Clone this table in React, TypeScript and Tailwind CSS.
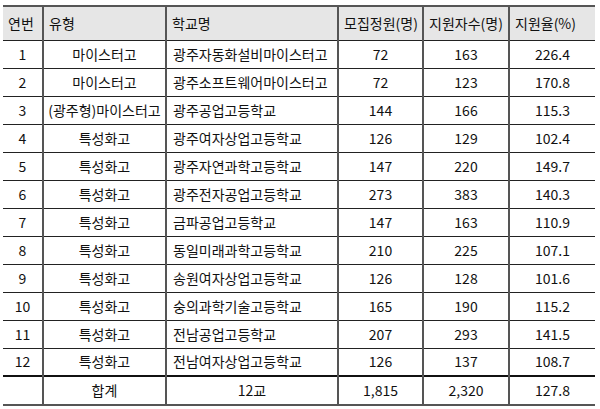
const rows = [
  [1, "마이스터고", "광주자동화설비마이스터고", "72", "163", "226.4"],
  [2, "마이스터고", "광주소프트웨어마이스터고", "72", "123", "170.8"],
  [3, "(광주형)마이스터고", "광주공업고등학교", "144", "166", "115.3"],
  [4, "특성화고", "광주여자상업고등학교", "126", "129", "102.4"],
  [5, "특성화고", "광주자연과학고등학교", "147", "220", "149.7"],
  [6, "특성화고", "광주전자공업고등학교", "273", "383", "140.3"],
  [7, "특성화고", "금파공업고등학교", "147", "163", "110.9"],
  [8, "특성화고", "동일미래과학고등학교", "210", "225", "107.1"],
  [9, "특성화고", "송원여자상업고등학교", "126", "128", "101.6"],
  [10, "특성화고", "숭의과학기술고등학교", "165", "190", "115.2"],
  [11, "특성화고", "전남공업고등학교", "207", "293", "141.5"],
  [12, "특성화고", "전남여자상업고등학교", "126", "137", "108.7"],
];

const headers = ["연번", "유형", "학교명", "모집정원(명)", "지원자수(명)", "지원율(%)"];
const widths = ["w-[40px]", "w-[123px]", "w-[172px]", "w-[85px]", "w-[86px]", "w-[86px]"];

export default function App() {
  return (
    <div className="w-[600px] h-[409px] bg-white pt-[5px] pl-[3px] font-['Malgun_Gothic','Noto_Sans_CJK_KR',sans-serif] text-[14px] text-[#111]">
      <table className="w-[592px] table-fixed border-collapse">
        <colgroup>
          {widths.map((w, i) => (
            <col key={i} className={w} />
          ))}
        </colgroup>
        <thead>
          <tr className="h-[34px] bg-[#e6e6e6] border-t-2 border-t-[#555] border-b border-b-[#222]">
            {headers.map((h, i) => (
              <th
                key={h}
                className={`font-normal text-left px-[5px] whitespace-nowrap ${i > 0 ? "border-l-2 border-l-[#555]" : ""}`}
              >
                {h}
              </th>
            ))}
          </tr>
        </thead>
        <tbody>
          {rows.map((r) => (
            <tr key={r[0]} className="h-[28px] border-b border-b-[#222]">
              <td className="text-center">{r[0]}</td>
              <td className="text-center border-l-2 border-l-[#555] whitespace-nowrap">{r[1]}</td>
              <td className="text-left px-[6px] border-l-2 border-l-[#555] whitespace-nowrap">{r[2]}</td>
              <td className="text-center border-l-2 border-l-[#555]">{r[3]}</td>
              <td className="text-center border-l-2 border-l-[#555]">{r[4]}</td>
              <td className="text-center border-l-2 border-l-[#555]">{r[5]}</td>
            </tr>
          ))}
          <tr className="h-[29px] border-t-2 border-t-[#111] border-b-2 border-b-[#555]">
            <td></td>
            <td className="text-center border-l-2 border-l-[#555]">합계</td>
            <td className="text-center border-l-2 border-l-[#555]">12교</td>
            <td className="text-center border-l-2 border-l-[#555]">1,815</td>
            <td className="text-center border-l-2 border-l-[#555]">2,320</td>
            <td className="text-center border-l-2 border-l-[#555]">127.8</td>
          </tr>
        </tbody>
      </table>
    </div>
  );
}
